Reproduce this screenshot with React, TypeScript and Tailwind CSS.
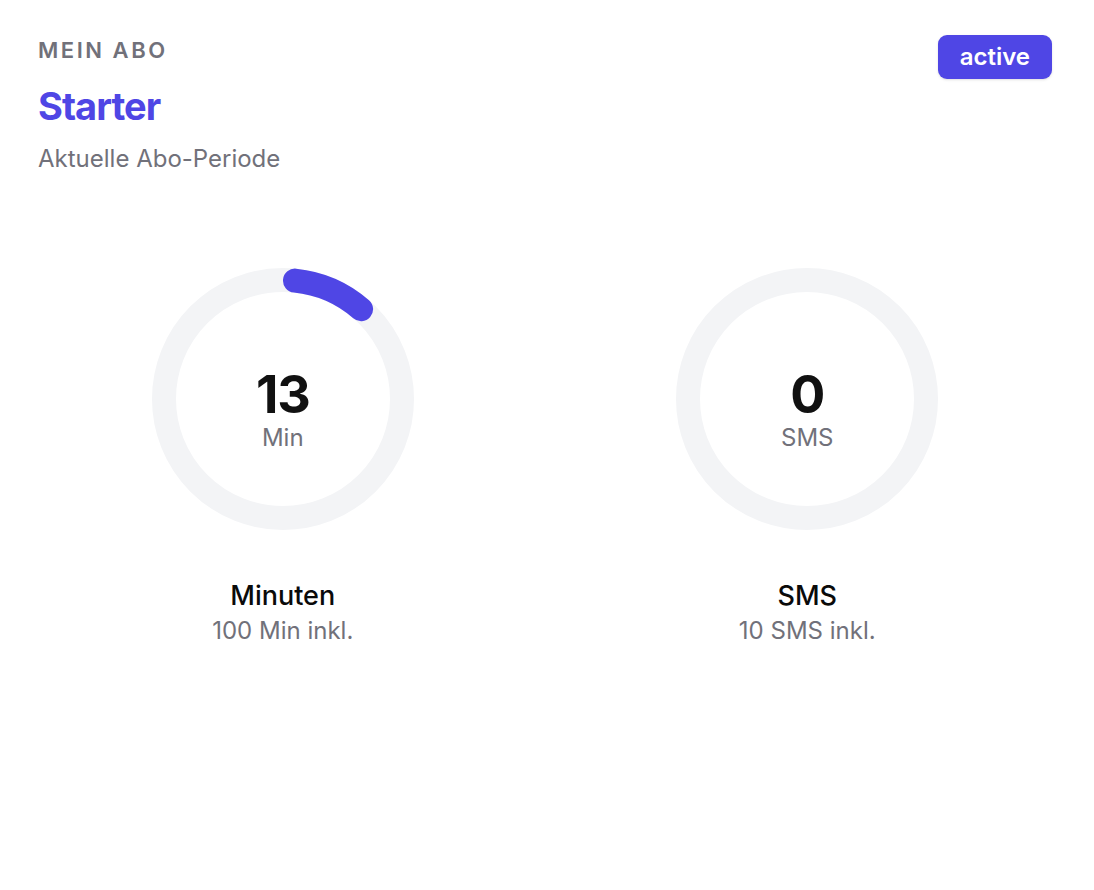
import React from "react";

type Meter = {
  value: number;
  max: number;
  unit: string;
  title: string;
  included: string;
};

const meters: Meter[] = [
  { value: 13, max: 100, unit: "Min", title: "Minuten", included: "100 Min inkl." },
  { value: 0, max: 10, unit: "SMS", title: "SMS", included: "10 SMS inkl." },
];

const SIZE = 262;
const STROKE = 24;
const R = (SIZE - STROKE) / 2;
const C = SIZE / 2;

function point(deg: number) {
  const rad = (deg * Math.PI) / 180;
  return [C + R * Math.sin(rad), C - R * Math.cos(rad)];
}

// rounded arc that stays inside its sweep, like a radial bar with corner radius
function arcPath(pct: number) {
  const sweep = 360 * pct;
  const capDeg = ((STROKE / 2) / R) * (180 / Math.PI);
  if (sweep <= capDeg * 2) return null;
  const a0 = capDeg;
  const a1 = sweep - capDeg;
  const [x0, y0] = point(a0);
  const [x1, y1] = point(a1);
  const large = a1 - a0 > 180 ? 1 : 0;
  return `M ${x0.toFixed(2)} ${y0.toFixed(2)} A ${R} ${R} 0 ${large} 1 ${x1.toFixed(2)} ${y1.toFixed(2)}`;
}

function Ring({ meter }: { meter: Meter }) {
  const d = arcPath(meter.max ? meter.value / meter.max : 0);
  return (
    <div className="flex flex-col items-center">
      <div className="relative h-[262px] w-[262px]">
        <svg width={SIZE} height={SIZE} viewBox={`0 0 ${SIZE} ${SIZE}`}>
          <circle cx={C} cy={C} r={R} fill="none" stroke="#f3f4f6" strokeWidth={STROKE} />
          {d ? (
            <path d={d} fill="none" stroke="#4f46e5" strokeWidth={STROKE} strokeLinecap="round" />
          ) : null}
        </svg>
        <div className="absolute inset-0 flex flex-col items-center pt-[101px]">
          <span className="text-[52px] font-bold leading-[52px] tracking-tight text-[#111111]">{meter.value}</span>
          <span className="mt-[4px] text-[24px] leading-[26px] text-[#71717a]">{meter.unit}</span>
        </div>
      </div>
      <div className="mt-[48px] text-[27px] font-medium leading-[36px] text-[#0a0a0a]">{meter.title}</div>
      <div className="mt-[2px] text-[24px] leading-[30px] text-[#71717a]">{meter.included}</div>
    </div>
  );
}

export default function App() {
  return (
    <div className="min-h-screen bg-white pl-[38px] pr-[42px] pt-[36px] font-['Inter',sans-serif]">
      <div className="flex items-start justify-between">
        <div>
          <div className="text-[22px] font-semibold uppercase leading-[28px] tracking-[0.115em] text-[#71717a]">
            Mein Abo
          </div>
          <div className="mt-[20px] text-[38px] font-bold leading-[44px] tracking-tight text-[#4f46e5]">
            Starter
          </div>
          <div className="mt-[15px] text-[24px] leading-[32px] text-[#71717a]">Aktuelle Abo-Periode</div>
        </div>
        <span className="-mt-[1px] flex h-[44px] items-center rounded-[9px] bg-[#4f46e5] px-[22px] text-[24px] font-semibold text-white shadow-sm">
          active
        </span>
      </div>
      <div className="mt-[93px] grid grid-cols-2 gap-[35px]">
        {meters.map((m) => (
          <Ring key={m.title} meter={m} />
        ))}
      </div>
    </div>
  );
}
